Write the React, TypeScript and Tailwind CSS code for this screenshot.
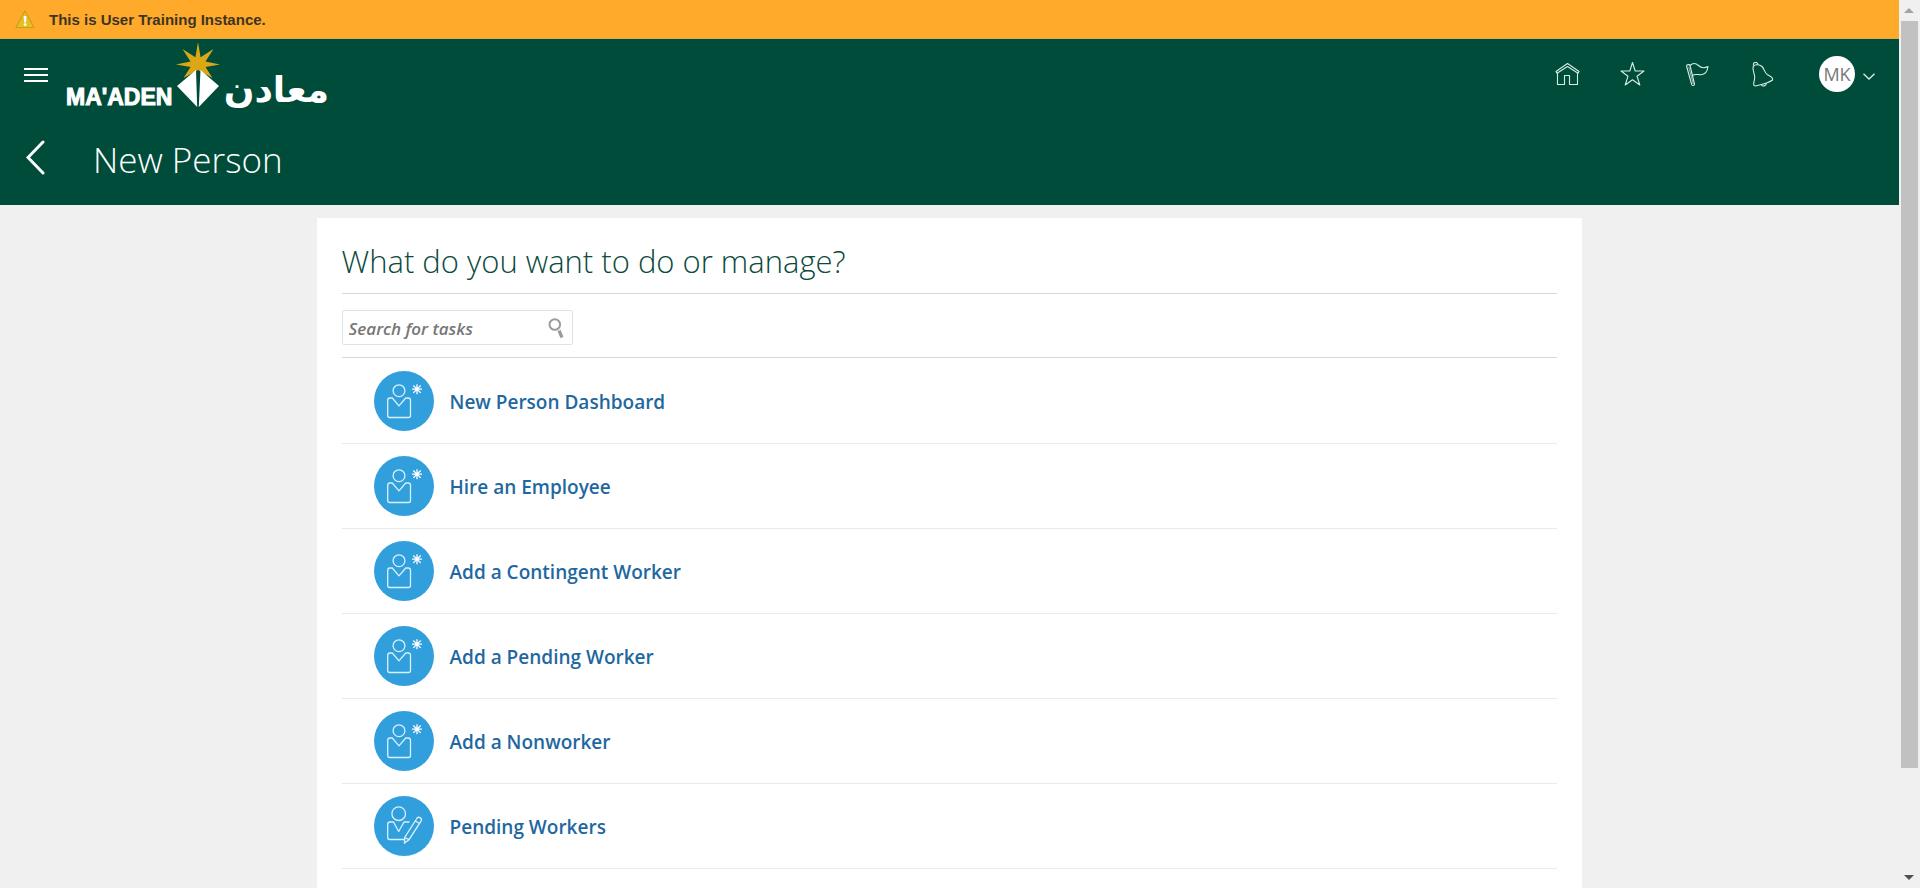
import React from "react";

type Task = { label: string; icon: "new" | "edit" };

const tasks: Task[] = [
  { label: "New Person Dashboard", icon: "new" },
  { label: "Hire an Employee", icon: "new" },
  { label: "Add a Contingent Worker", icon: "new" },
  { label: "Add a Pending Worker", icon: "new" },
  { label: "Add a Nonworker", icon: "new" },
  { label: "Pending Workers", icon: "edit" },
];

function WarningIcon() {
  return (
    <svg width="20" height="19" viewBox="0 0 20 19" aria-hidden="true">
      <path d="M10 1 L19 17.5 H1 Z" fill="#e9c51c" stroke="#c99a25" strokeWidth="1.2" strokeLinejoin="round" />
      <path d="M10 3 L17 16.5 H3 Z" fill="#e6bf1f" />
      <path d="M8.7 6 h2.8 l-.5 6.4 h-1.8 z" fill="#fff" />
      <circle cx="10.1" cy="14.6" r="1.4" fill="#fff" />
    </svg>
  );
}

function Logo() {
  return (
    <svg className="overflow-visible" width="264" height="68" viewBox="0 0 264 68" role="img" aria-label="Ma'aden">
      <path
        d="M132 1 L134.6 16.2 L147.5 8 L139.5 20.5 L154 23.5 L139.5 26 L146.5 37 L132 29 L117.5 37 L124.5 26 L110 23.5 L124.5 20.5 L116.5 8 L129.400 16.200 Z"
        fill="#dba716"
      />
      <path d="M130 29 L111 45 L131.200 66 Z" fill="#fff" />
      <path d="M134.500 29 L153 45 L132.800 66 Z" fill="#fff" />
      <text x="0" y="64" fill="#fff" stroke="#fff" strokeWidth="1" fontSize="23" fontWeight="700" fontFamily="'Liberation Sans', sans-serif">
        MA'ADEN
      </text>
      <text x="263" y="61" direction="rtl" textAnchor="start" fill="#fff" fontSize="36" fontWeight="700" fontFamily="'DejaVu Sans', sans-serif">
        معادن
      </text>
    </svg>
  );
}

function HomeIcon() {
  return (
    <>
      <path d="M1 9.500 L12.500 1.500 L24 9.500 L23 11.200 L12.500 4.500 L2 11.200 Z" />
      <path d="M2.500 11 V22.500 H9.500 V13.500 H14.500 V22.500 H22.500 V11" />
    </>
  );
}

function StarIcon() {
  return <path d="M12.500 .5 L15.200 9 H24 L17 14.200 L19.800 23 L12.500 17.700 L5.200 23 L8 14.200 L1 9 H9.800 Z" />;
}

function FlagIcon() {
  return (
    <>
      <path d="M1.500 4 C1.500 2.500 4.500 2 5 3.500 L9.500 22 C9.500 23.800 7 24 6.700 22.500 Z" />
      <path d="M3.800 5 L8.300 22" strokeWidth="0.7" />
      <path d="M5 3.500 C8 .5 11 1.200 13.500 3.500 C16 6 19 6.500 23 4.500 C22.500 9 20 12.500 16 12.700 C13 12.800 10 11.500 7.300 13.500" />
    </>
  );
}

function BellIcon() {
  return (
    <>
      <path d="M3.500 3.500 C2.500 -.5 8 -.5 7.800 2.500" />
      <path d="M3 6 C3 2.500 9 1.500 12 4.500 C14.500 7 14.500 11 17.500 12.700 C20 14 23.500 15.500 22.500 18 C18 21.500 11 22.500 5 24 C2 23.500 5 18 4.700 15 C4.500 12 3 9 3 6 Z" />
      <path d="M11.500 22.700 C12.500 25 16.500 24 16.200 21.200" />
    </>
  );
}

const headerActions = [
  { label: "Home", glyph: <HomeIcon /> },
  { label: "Favorites", glyph: <StarIcon /> },
  { label: "Watchlist", glyph: <FlagIcon /> },
  { label: "Notifications", glyph: <BellIcon /> },
];

function TaskIcon({ kind }: { kind: Task["icon"] }) {
  return (
    <svg className="size-15 shrink-0" viewBox="0 0 60 60" fill="none" stroke="#d9f1fb" strokeWidth="1.3" aria-hidden="true">
      <circle cx="30" cy="30" r="30" fill="#329fdd" stroke="none" />
      {kind === "new" ? (
        <>
          <circle cx="25" cy="19.700" r="5.900" />
          <path d="M18.300 27 H16 Q13.700 27 13.700 29.300 V44.500 Q13.700 46.500 15.700 46.500 H34.500 Q36.500 46.500 36.500 44.500 V29.300 Q36.500 27 34.300 27 H31.700 L25 34.800 Z" strokeLinejoin="round" />
          <path d="M43 13.200 V23.200 M38 18.200 H48 M39.300 14.500 L46.700 21.900 M46.700 14.500 L39.300 21.900" stroke="#fff" />
        </>
      ) : (
        <>
          <circle cx="24.700" cy="17.700" r="6.800" />
          <path d="M30.500 43.500 H15.700 Q13.700 43.500 13.700 41.500 V28.500 Q13.700 26 16 26 H19.500 L24.700 35.500 L30 26 H35.500" strokeLinejoin="round" />
          <path d="M42.500 23 Q43.500 20.500 46 21.600 Q48.200 22.700 47.300 24.700 L35 43.700 L30.500 47 L30.700 41.500 Z M41.300 25 L45.700 27.500 M30.700 41.500 L35 43.700" />
        </>
      )}
    </svg>
  );
}

function Scrollbar() {
  return (
    <div className="flex w-[21px] shrink-0 flex-col items-center bg-[#f0f0f0] pr-px" aria-hidden="true">
      <div className="flex h-[21px] items-center">
        <svg width="10" height="5" viewBox="0 0 10 5"><path d="M5 0 L10 5 H0 Z" fill="#a3a3a3" /></svg>
      </div>
      <div className="w-[17px] grow-[53] bg-[#c1c1c1]" />
      <div className="grow-[7]" />
      <div className="flex h-[21px] items-center">
        <svg width="10" height="5" viewBox="0 0 10 5"><path d="M0 0 H10 L5 5 Z" fill="#505050" /></svg>
      </div>
    </div>
  );
}

export default function App() {
  return (
    <div className="flex h-screen overflow-hidden bg-[#f0f0f0] font-['Open_Sans','Noto_Sans',sans-serif]">
      <div className="flex min-w-0 grow flex-col">
        <div role="status" className="flex h-[39px] shrink-0 items-center gap-[14px] border-b border-[#d9b050] bg-[#ffaa2b] pl-[15px]">
          <WarningIcon />
          <p className="pt-0.5 font-['Liberation_Sans',sans-serif] text-[15px] font-bold text-[#3d3523]">This is User Training Instance.</p>
        </div>

        <header className="shrink-0 bg-[#004c3b] text-white">
          <div className="flex h-[72px] items-center justify-between pr-6 pl-6">
            <div className="flex items-center gap-[18px]">
              <button type="button" aria-label="Navigator" className="flex w-6 flex-col gap-1">
                <span className="h-0.5 bg-white" />
                <span className="h-0.5 bg-white" />
                <span className="h-0.5 bg-white" />
              </button>
              <a href="#home"><Logo /></a>
            </div>
            <div className="flex items-center pb-0.5">
              <nav className="flex gap-10">
                {headerActions.map((action) => (
                  <button key={action.label} type="button" aria-label={action.label}>
                    <svg width="25" height="25" viewBox="0 0 25 25" fill="none" stroke="#d5ede6" strokeWidth="1.1" strokeLinejoin="round">
                      {action.glyph}
                    </svg>
                  </button>
                ))}
              </nav>
              <button type="button" aria-label="Settings and Actions" className="ml-11 flex items-center gap-2">
                <span className="flex size-9 items-center justify-center rounded-full bg-white text-lg text-[#777]">MK</span>
                <svg className="mt-1" width="12" height="7" viewBox="0 0 12 7" fill="none" stroke="#d5ede6" strokeWidth="1.3"><path d="M.5 .7 L6 6 L11.500 .7" /></svg>
              </button>
            </div>
          </div>
          <div className="flex h-[94px] items-center pl-[26px]">
            <button type="button" aria-label="Back">
              <svg width="19" height="36" viewBox="0 0 19 36" fill="none" stroke="#fff" strokeWidth="3" strokeLinecap="round"><path d="M17 2 L2 17.500 L17 33" /></svg>
            </button>
            <h1 className="ml-12 pt-1 text-[35px] leading-[44px] font-light">New Person</h1>
          </div>
        </header>

        <main className="mx-auto mt-[13px] w-2/3 grow bg-white px-[25px] pt-5">
          <h2 className="border-b border-[#d5d9da] pb-2 text-[31px] leading-[47px] font-light text-[#0b4a3e]">What do you want to do or manage?</h2>
          <div className="border-b border-[#d5d9da] py-3">
            <form role="search" className="mt-1 flex h-[35px] w-[231px] items-center rounded-xs border border-[#dfe3e5] pr-2 pl-[6px]">
              <input
                type="search"
                aria-label="Search for tasks"
                placeholder="Search for tasks"
                className="min-w-0 grow pt-0.5 text-[17px] font-semibold italic outline-none placeholder:text-[#777]"
              />
              <button type="submit" aria-label="Search">
                <svg width="16" height="22" viewBox="0 0 16 22" fill="none" stroke="#999c9f">
                  <circle cx="6.800" cy="7.500" r="5.300" strokeWidth="2" />
                  <path d="M11 13.500 L14 20.500" strokeWidth="3.200" />
                </svg>
              </button>
            </form>
          </div>
          <ul className="pt-px">
            {tasks.map((task) => (
              <li key={task.label} className="border-b border-[#e8eaeb] py-3 pl-8">
                <a href="#task" className="flex items-center gap-4 text-[19px] font-semibold text-[#1f689f]">
                  <TaskIcon kind={task.icon} />
                  <span className="pt-0.5">{task.label}</span>
                </a>
              </li>
            ))}
          </ul>
        </main>
      </div>
      <Scrollbar />
    </div>
  );
}
